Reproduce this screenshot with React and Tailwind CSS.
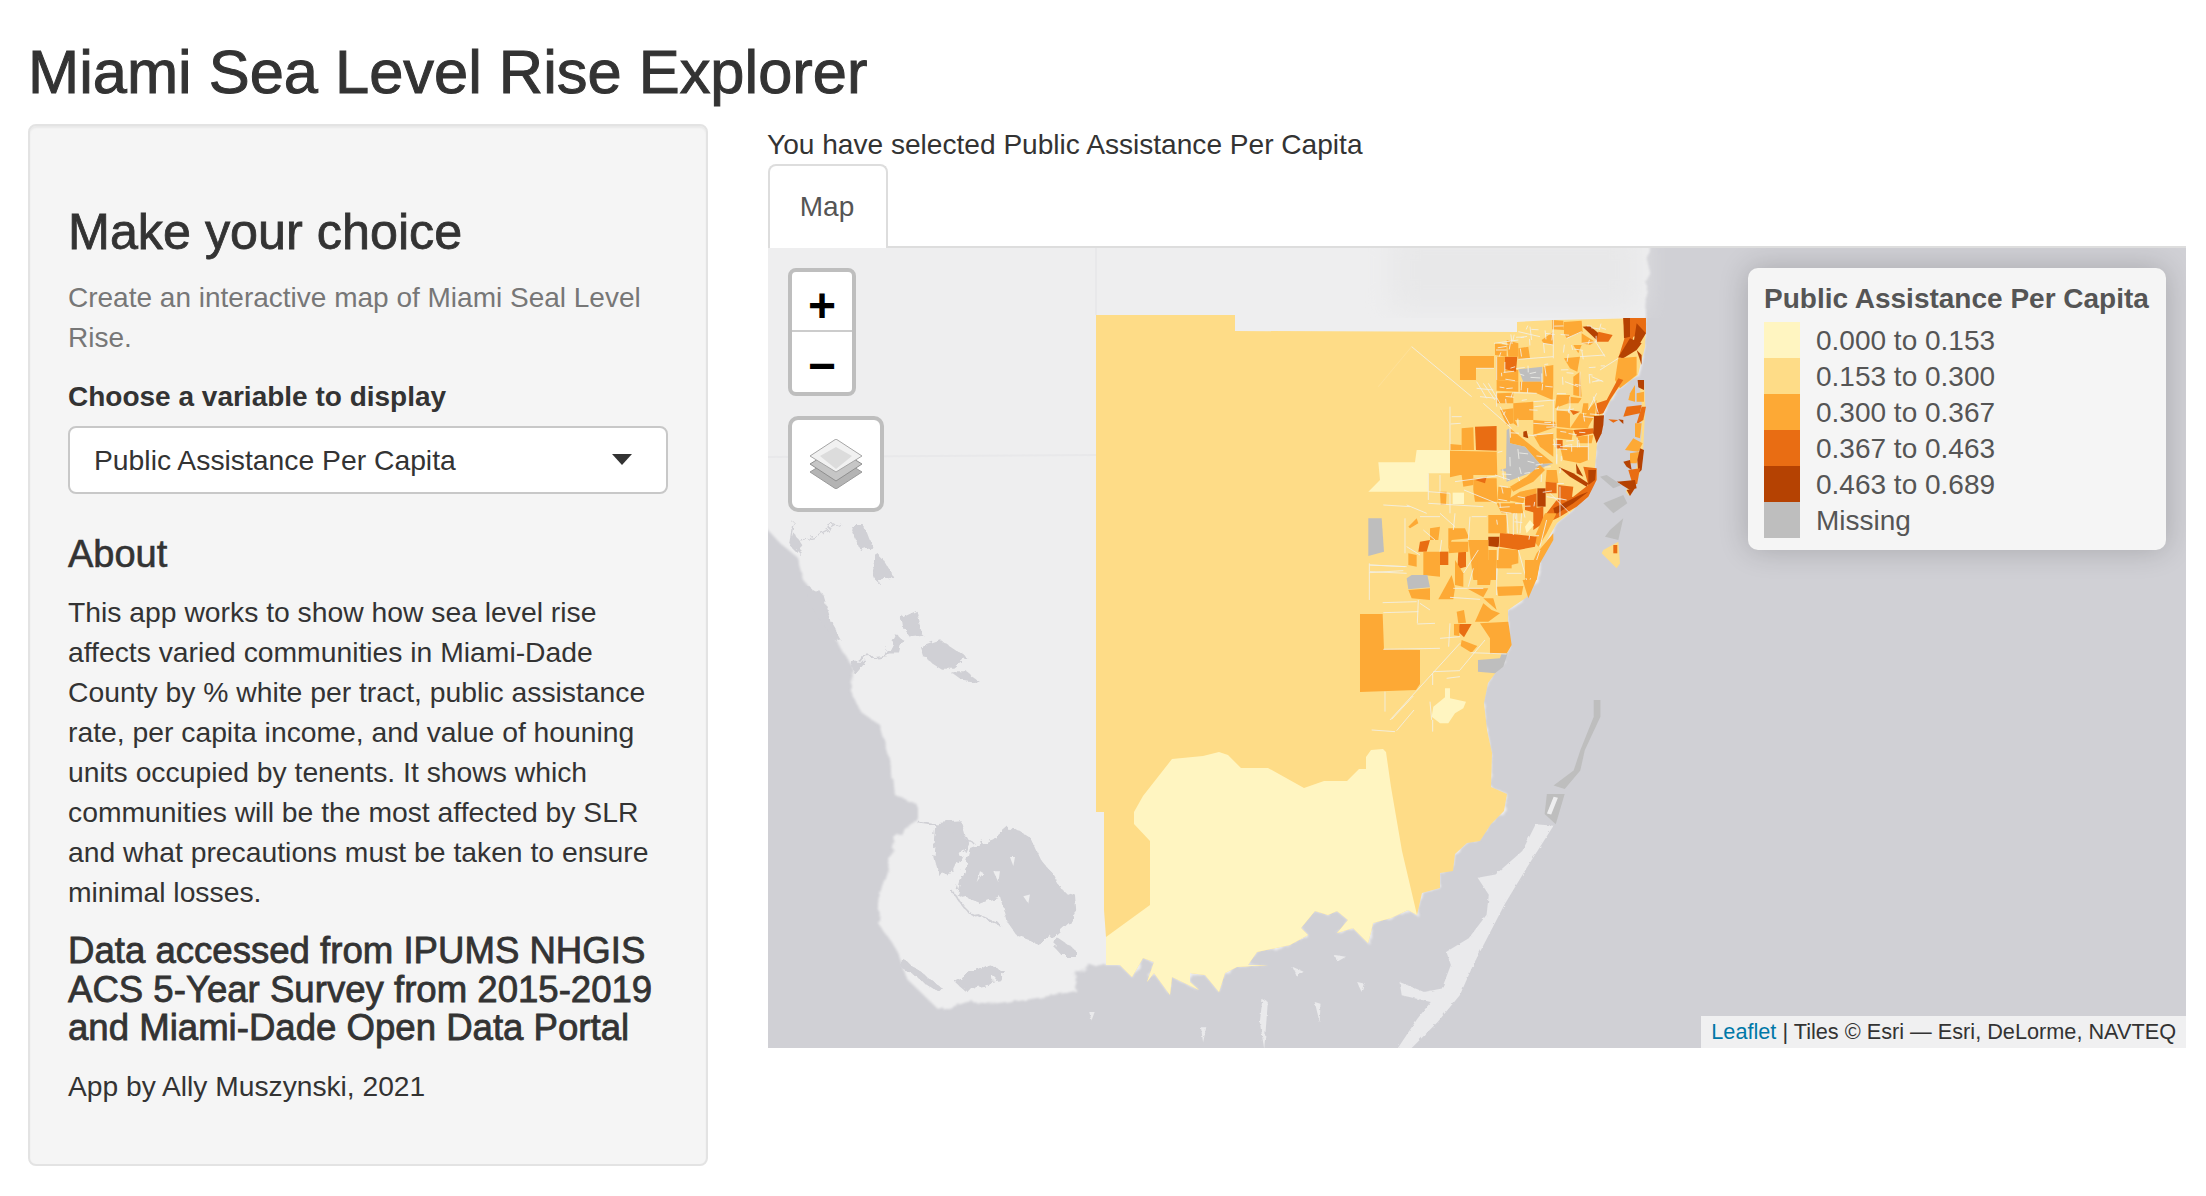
import React from "react";

const COLORS = {
  L: "#fff5c1",
  Y: "#fedc87",
  A: "#fda935",
  B: "#e96d13",
  C: "#b54202",
  G: "#bebebe",
};

const LEGEND = [
  ["#fff5c1", "0.000 to 0.153"],
  ["#fedc87", "0.153 to 0.300"],
  ["#fda935", "0.300 to 0.367"],
  ["#e96d13", "0.367 to 0.463"],
  ["#b54202", "0.463 to 0.689"],
  ["#bebebe", "Missing"],
];

/* ---------------- COASTLINES (page coordinates) ---------------- */
const EAST =
  "1646,318 1645,347 1638,375 1617,390 1603,413 1597,443 1595,467 1595,480 1585,497 1573,510 1557,523 1543,547 1540,560 1537,577 1527,597 1508,610 1508,640 1510,648 1500,667 1488,683 1484,703 1487,730 1492,753 1491,787 1507,794 1504,811 1491,824 1480,841 1467,843 1455,854 1453,871 1440,873 1440,888 1422,893 1417,915";
const SOUTH =
  "1408,910 1391,918 1373,923 1371,932 1368,943 1353,928 1337,933 1348,920 1337,911 1328,915 1315,911 1301,928 1308,935 1290,945 1257,952 1248,965 1268,965 1237,967 1225,973 1219,992 1205,975 1190,973 1190,982 1199,990 1172,977 1170,995 1154,973 1147,982 1154,962 1143,958 1132,977 1120,965 1106,965";
const WEST =
  "1089,965 1077,973 1076,991 1037,998 1000,1004 967,1002 940,1011 907,979 897,950 878,923 880,893 888,868 895,839 917,821 917,804 895,795 893,775 887,750 880,725 860,711 850,689 855,671 842,650 835,639 822,607 803,579 797,557 780,543 768,530";

const LAND = `700,190 1650,190 ${EAST} ${SOUTH} ${WEST} 700,470`;
const YELLOW = `1096,315 1235,315 1235,331 1517,332 1517,322 1553,320 1646,318 ${EAST} ${SOUTH} 1106,937 1104,910 1104,812 1096,812`;
const LIGHT = `1106,937 1150,905 1150,841 1134,824 1134,812 1143,796 1172,759 1203,756 1219,752 1228,755 1241,768 1268,768 1304,788 1324,781 1347,781 1359,769 1366,769 1366,757 1371,750 1383,749 1386,752 1391,787 1402,851 1417,915 ${SOUTH}`;

/* ---------------- TRACTS, NORTH HALF ---------------- */
const NORTH = [
  ["A", "360,168 462,168 462,205 408,205 408,240 360,240"],
  ["A", "468,170 495,170 495,210 535,210 535,245 468,240"],
  ["B", "495,170 532,170 528,215 495,208"],
  ["G", "535,208 607,200 607,245 550,245"],
  ["A", "636,60 670,62 672,90 636,88"],
  ["A", "672,66 725,62 728,95 680,115 672,100"],
  ["A", "725,100 765,125 750,135 725,130"],
  ["C", "728,80 750,78 782,105 770,120"],
  ["B", "775,95 818,105 805,125 770,125"],
  ["B", "850,54 918,54 918,100 880,110 870,150 835,175 855,110"],
  ["C", "850,54 870,54 870,110 852,115"],
  ["C", "890,70 918,100 900,130 880,135"],
  ["C", "870,115 905,130 890,150 850,175 835,172"],
  ["C", "890,150 905,165 905,195"],
  ["A", "835,175 890,170 890,225 840,265 825,240"],
  ["A", "700,135 725,135 715,160"],
  ["A", "672,175 720,170 712,215 690,205"],
  ["A", "605,120 640,95 640,135 610,130"],
  ["A", "535,145 565,140 570,175 535,178"],
  ["A", "465,130 500,135 500,170 465,165"],
  ["A", "500,120 535,130 535,170 505,170"],
  ["A", "610,200 640,195 640,260 610,260"],
  ["A", "470,240 535,245 535,275 470,272"],
  ["A", "540,245 605,245 640,260 638,300 590,280 540,275"],
  ["A", "520,310 580,305 580,360 525,360 535,380 520,370"],
  ["A", "470,280 520,278 520,310 470,310"],
  ["A", "480,330 520,325 520,370 500,375"],
  ["A", "700,230 720,215 725,290 700,285"],
  ["A", "650,285 690,285 685,310 645,325"],
  ["A", "745,330 770,300 765,345 745,380 720,380"],
  ["A", "720,340 745,345 745,385 690,385"],
  ["A", "580,360 645,365 650,380 580,405"],
  ["A", "580,405 640,400 640,470 600,440"],
  ["A", "660,440 745,440 745,480 720,490 670,480"],
  ["A", "650,330 690,335 690,385 650,380"],
  ["A", "690,290 725,295 715,310 685,310"],
  ["A", "730,310 745,310 745,340 725,340"],
  ["B", "690,330 720,335 700,345"],
  ["A", "650,385 700,390 695,420 650,415"],
  ["B", "700,390 760,385 762,400 710,410"],
  ["A", "710,410 760,405 755,430 715,430"],
  ["B", "648,420 668,420 668,448 648,445"],
  ["A", "365,385 400,382 402,450 365,450"],
  ["B", "405,380 470,378 470,452 408,450"],
  ["A", "330,452 470,455 472,525 360,525 330,532"],
  ["A", "330,432 365,435 365,450 330,450"],
  ["A", "510,385 640,490 600,492 555,440 510,430"],
  ["G", "500,390 508,385 510,430 555,440 600,492 640,490 555,525 500,545 498,515 480,510 498,505"],
  ["A", "365,525 400,525 400,555 370,560"],
  ["A", "400,535 470,535 472,605 405,605 400,570"],
  ["B", "405,540 440,530 435,550"],
  ["A", "475,560 515,565 510,605 472,605"],
  ["A", "300,575 320,575 318,615 302,615"],
  ["A", "510,560 560,530 600,495 615,510 580,545 520,575"],
  ["A", "540,575 590,565 590,580 555,590 550,610 500,600"],
  ["A", "620,510 650,510 655,550 617,545"],
  ["B", "555,590 590,580 590,640 555,630"],
  ["A", "470,610 545,610 550,640 500,640 485,640"],
  ["B", "580,625 610,620 610,670 580,690"],
  ["C", "592,565 617,565 617,620 592,620"],
  ["B", "617,545 650,548 650,580 617,580"],
  ["B", "655,555 700,560 695,600 655,595"],
  ["B", "730,500 770,505 770,540 745,590 710,620 660,650 640,660 612,650 650,600 700,590 745,555"],
  ["C", "708,490 730,530 710,520"],
  ["C", "745,510 768,510 765,540 745,555"],
  ["C", "655,500 700,520 745,550 740,560 690,530"],
  ["C", "640,625 720,585 745,575 700,610 645,645"],
  ["A", "615,640 650,640 620,700 595,740 580,720"],
  ["A", "555,840 590,760 640,700 640,720 600,790 590,840"],
  ["B", "480,698 590,710 585,740 535,750 478,740"],
  ["C", "445,710 478,710 476,742 445,738"],
  ["A", "445,645 500,645 500,700 445,700"],
  ["A", "475,745 535,750 535,790 475,805"],
  ["A", "445,750 470,750 470,840 445,840"],
  ["L", "555,680 570,660 582,675 560,700"],
  ["B", "240,725 270,720 260,755 235,755"],
  ["A", "250,755 300,755 300,830 250,825"],
  ["B", "300,755 325,755 325,795 300,795"],
  ["B", "355,755 378,755 378,800 352,808"],
  ["A", "325,685 375,685 388,715 335,720 325,750"],
  ["A", "385,720 445,720 445,840 400,840"],
  ["A", "330,725 385,725 385,755 325,760"],
  ["A", "205,680 230,655 235,670 210,685"],
  ["A", "270,685 300,680 295,720 270,720"],
  ["A", "205,760 230,765 230,800 205,795"],
  ["C", "762,348 792,346 790,375 785,400 770,430 760,400"],
  ["B", "770,310 800,300 835,235 850,240 810,300 790,340 770,345"],
  ["C", "550,395 560,392 565,415 550,410"],
  ["Y", "895,240 912,240 916,320 910,440 900,520 868,588 858,575 890,500 905,400 905,300"],
  ["C", "893,240 912,240 912,270 895,262"],
  ["A", "870,280 885,255 885,305 865,300"],
  ["A", "890,280 912,275 912,305 890,305"],
  ["B", "860,320 905,315 900,340 850,350"],
  ["B", "890,370 905,320 918,320 910,360 895,370"],
  ["A", "885,370 905,370 900,415 885,410"],
  ["A", "855,450 880,415 908,430 895,455"],
  ["A", "870,460 900,455 890,490 870,490"],
  ["C", "900,445 912,450 905,510 895,520 892,480"],
  ["C", "850,485 870,480 875,510 860,500"],
  ["B", "865,510 900,505 892,550 880,560"],
  ["C", "830,545 885,540 890,565 870,570"],
  ["C", "860,570 885,565 870,588"],
  ["B", "805,358 835,360 820,368"],
  ["C", "835,358 850,360 850,372"],
  ["G", "780,530 800,525 845,555 820,565"],
  ["G", "790,610 850,585 862,610 820,640"],
  ["G", "810,690 850,655 835,720 795,710"],
  ["Y", "790,750 835,725 840,790 830,805 785,760"],
  ["B", "820,735 832,735 832,760 820,760"],
  ["G", "85,655 125,655 132,755 85,768"],
  ["L", "115,487 225,487 230,450 330,450 330,520 265,520 265,575 85,575 120,540"],
  ["L", "338,578 372,578 372,612 338,612"],
];

/* ---------------- TRACTS, SOUTH HALF ---------------- */
const SOUTH_TRACTS = [
  ["G", "200,55 215,45 262,45 270,82 205,88"],
  ["A", "205,90 270,85 270,120 215,115"],
  ["A", "60,162 128,162 132,268 240,270 240,372 228,390 60,396"],
  ["L", "280,440 315,412 315,385 330,385 330,415 378,425 370,445 345,460 325,490 300,490 275,470"],
  ["G", "414,300 480,295 485,280 503,280 490,320 465,340 414,335"],
  ["A", "420,190 505,185 515,255 500,280 450,282 450,235"],
  ["B", "358,192 395,192 372,232 355,215"],
  ["A", "342,192 358,192 358,228 342,226"],
  ["A", "365,240 412,258 395,278 362,258"],
  ["A", "350,155 372,150 378,188 355,190"],
  ["A", "405,185 430,130 455,150 480,160 445,185"],
  ["A", "295,118 335,45 345,85 340,118"],
  ["A", "345,0 370,40 370,80 345,75"],
  ["A", "380,85 445,85 430,112"],
  ["A", "470,80 550,78 545,105 475,108"],
  ["A", "430,115 460,115 470,150"],
  ["A", "548,60 590,58 565,115"],
  ["A", "555,0 600,0 590,55 555,55"],
  ["A", "412,0 460,0 450,75 412,75"],
  ["A", "470,0 515,0 515,25 470,25"],
];

const SOUTH_GAPS = [
  "88,15 195,20", "88,38 190,32", "88,10 88,120", "128,128 230,125", "130,158 235,155",
  "235,120 232,190", "232,192 285,190", "330,112 420,118", "300,235 360,230", "330,190 326,260",
  "130,268 300,265", "360,250 150,480", "280,335 360,332", "278,340 278,375", "320,355 360,350",
  "135,395 135,455", "220,408 155,478", "222,450 170,512", "270,425 275,480", "278,480 278,515",
  "95,510 165,515", "392,278 500,282", "435,240 360,330", "340,85 430,85", "470,25 470,105",
  "545,40 500,40", "400,25 385,80", "240,130 270,150",
];

const NORTH_GAPS = [
  "215,140 395,290", "430,310 515,385", "330,320 330,450", "335,350 365,350",
  "332,372 362,370", "570,80 575,120", "640,60 640,175", "535,95 600,110", "535,178 640,170",
  "462,130 535,120", "468,150 500,150", "408,205 462,205", "470,170 470,240", "610,130 640,135",
  "680,115 725,95", "725,130 770,125", "770,130 795,170", "835,175 780,210", "720,170 795,165",
  "675,245 715,260", "720,215 720,290", "755,230 790,245", "770,280 745,330", "640,300 640,380",
  "580,305 645,300", "520,278 590,280", "470,275 470,320", "650,330 690,330", "690,290 690,330",
  "760,290 775,340", "660,440 745,440", "745,405 745,480", "650,415 650,490", "580,370 650,375",
  "580,405 640,400", "410,245 440,295", "430,250 465,300", "445,250 480,310", "410,265 460,270",
  "420,290 470,295", "480,320 510,375", "465,525 510,540", "345,545 470,528", "265,520 265,600",
  "300,525 300,575", "265,575 330,580", "372,570 470,610", "330,580 330,640", "265,610 430,620",
  "200,615 260,640", "130,615 210,620", "195,655 195,760", "240,650 300,650", "250,690 285,720",
  "300,640 345,680", "345,640 340,690", "395,650 440,650", "390,650 385,720", "305,720 300,755",
  "500,640 505,700", "520,640 520,705", "530,640 532,700", "545,640 540,700", "415,750 370,820",
  "475,740 470,840", "535,750 560,840", "600,750 570,840", "200,740 240,765", "90,795 200,800",
  "90,815 200,820", "620,660 600,740", "620,590 680,600", "660,560 660,650", "630,580 690,640",
];

/* short tract edges in the dense part of the county, same every run */
const makeEdges = () => {
  let seed = 7;
  const rnd = () => {
    seed = (seed * 16807) % 2147483647;
    return seed / 2147483647;
  };
  const out = [];
  for (let i = 0; i < 170; i++) {
    const x = 470 + rnd() * 340;
    const y = 70 + rnd() * 640;
    const limit = 900 - (y > 250 ? (y - 250) * 0.42 : 0) - 130;
    if (x > limit + 20) continue;
    const horizontal = rnd() > 0.5;
    const len = 10 + rnd() * 22;
    const skew = (rnd() - 0.5) * 10;
    out.push(horizontal ? `${x},${y} ${x + len},${y + skew}` : `${x},${y} ${x + skew},${y + len}`);
  }
  return out;
};
const EDGES = makeEdges();

const Tracts = ({ items }) =>
  items.map(([c, points], i) => <polygon key={i} points={points} fill={COLORS[c]} />);

const Gaps = ({ items, width = 2.5 }) =>
  items.map((points, i) => (
    <polyline key={i} points={points} fill="none" stroke="#f1f0ea" strokeWidth={width} />
  ));

/* ---------------- BASE MAP ---------------- */
const MiamiMap = () => (
  <svg viewBox="768 248 1418 800" className="block w-[1418px] h-[800px]">
    <defs>
      <filter id="coast" x="-5%" y="-5%" width="110%" height="110%">
        <feTurbulence type="fractalNoise" baseFrequency="0.09" numOctaves="3" seed="4" />
        <feDisplacementMap in="SourceGraphic" scale="7" />
        <feGaussianBlur stdDeviation="0.9" />
      </filter>
      <filter id="mottled" x="-5%" y="-5%" width="110%" height="110%">
        <feTurbulence type="fractalNoise" baseFrequency="0.035" numOctaves="3" seed="9" />
        <feDisplacementMap in="SourceGraphic" scale="34" />
        <feGaussianBlur stdDeviation="1.4" />
      </filter>
      <filter id="haze">
        <feGaussianBlur stdDeviation="14" />
      </filter>
    </defs>
    <rect x="768" y="248" width="1418" height="800" fill="#d0d0d5" />
    <polygon points={LAND} fill="#eeeeef" filter="url(#coast)" />
    <rect x="1390" y="230" width="250" height="80" fill="#e8e8e9" filter="url(#haze)" />
    <polyline points="768,457 1096,455" fill="none" stroke="#e8e8ea" strokeWidth="2" />
    <polyline points="1096,248 1096,315" fill="none" stroke="#e8e8ea" strokeWidth="2" />

    {/* west coast islands and bays */}
    <g transform="matrix(0.3333,0,0,0.357,760,500)" fill="#d0d0d5" filter="url(#mottled)">
      <polygon points="630,975 700,950 750,910 810,945 840,1005 885,1055 910,1095 945,1105 950,1165 885,1220 830,1240 770,1220 740,1180 720,1110 660,1130 590,1105 610,1040" />
      <polygon points="530,905 605,900 625,960 585,1040 535,1050 520,1000" />
      <polygon points="890,1225 945,1260 945,1280 910,1280 885,1255" />
      <polygon points="585,1350 680,1300 735,1320 720,1345 640,1360 620,1380" />
      <polygon points="430,1285 550,1370 540,1380 425,1310" />
      <polygon points="480,410 540,390 620,440 580,470 540,470 490,440" />
      <polygon points="570,480 620,480 660,510 600,500" />
      <polygon points="425,330 470,310 490,380 450,385 430,360" />
      <polygon points="380,430 410,380 430,390 420,430" />
      <polygon points="270,450 320,450 285,490" />
      <polygon points="330,180 365,160 400,215 350,230" />
      <polygon points="270,70 310,70 335,130 300,140" />
      <polygon points="130,235 190,265 215,345 245,395 215,385 170,320 135,280" />
      <polygon points="100,90 130,130 110,150 90,120" />
      <polyline points="580,1100 620,1150 720,1190" fill="none" stroke="#d0d0d5" strokeWidth="5" />
      <polyline points="470,900 540,910 640,960" fill="none" stroke="#d0d0d5" strokeWidth="5" />
      <polyline points="290,445 380,435 410,380" fill="none" stroke="#d0d0d5" strokeWidth="5" />
      <polyline points="100,60 90,120 170,100 240,65" fill="none" stroke="#d0d0d5" strokeWidth="4" />
    </g>
    <g transform="matrix(0.3333,0,0,0.357,760,500)" fill="#eeeeef" filter="url(#coast)">
      <polygon points="700,1040 720,1040 715,1070" />
      <polygon points="790,1110 810,1105 805,1130" />
      <polygon points="660,1040 670,1045 650,1070" />
      <polygon points="750,1000 765,1000 760,1025" />
    </g>

    {/* key largo and small keys in the bay */}
    <g transform="matrix(0.4464,0,0,0.3356,1000,700)" fill="#eaeaec" filter="url(#coast)">
      <polygon points="1200,370 1240,375 1180,500 1130,610 1060,790 1030,880 980,960 920,1040 890,1040 935,950 965,900 900,880 895,840 950,870 990,860 1010,790 1000,750 1050,710 1090,640 1095,580 1070,530 1110,520 1170,450" />
      <polygon points="650,690 680,710 660,720" />
      <polygon points="588,890 600,900 592,1040 582,960" />
      <polygon points="705,900 718,905 716,960" />
      <polygon points="200,930 212,930 205,955" />
      <polygon points="800,840 815,845 810,870" />
      <polygon points="655,795 680,810 665,825" />
      <polygon points="750,760 775,765 755,780" />
      <polygon points="450,975 462,975 455,1020" />
    </g>
    <g transform="matrix(0.4464,0,0,0.3356,1000,700)">
      <polygon points="1225,280 1265,280 1245,370 1220,340" fill="#bebebe" />
      <polyline points="1245,290 1230,340" fill="none" stroke="#eeeeef" strokeWidth="10" />
      <polygon points="1345,0 1345,50 1310,150 1300,210 1265,265 1240,255 1285,210 1300,150 1330,50 1330,0" fill="#bebebe" />
    </g>

    {/* county */}
    <polygon points={YELLOW} fill={COLORS.Y} />
    <polygon points={LIGHT} fill={COLORS.L} />
    <g transform="translate(1340,300) scale(0.3333)">
      <polyline points="215,140 115,260" fill="none" stroke="#fee3a2" strokeWidth="2" />
      <Tracts items={NORTH} />
      <Gaps items={EDGES} width={2.5} />
      <Gaps items={NORTH_GAPS} />
    </g>
    <g transform="translate(1340,560) scale(0.3333)">
      <Tracts items={SOUTH_TRACTS} />
      <Gaps items={SOUTH_GAPS} />
    </g>
  </svg>
);

const LayersIcon = () => (
  <svg width="52" height="50" viewBox="0 0 52 50">
    <polygon points="0,33 26,17 52,33 26,50" fill="#b4b4b4" stroke="#9a9a9a" />
    <polygon points="0,25 26,9 52,25 26,42" fill="#c6c6c6" stroke="#8f8f8f" />
    <polygon points="0,17 26,0 52,17 26,33" fill="#f1f1f1" stroke="#a5a5a5" />
    <polygon points="10,17 26,8 42,17 26,30" fill="#dcdcdc" />
  </svg>
);

export default function App() {
  return (
    <div className="min-h-[1196px] bg-white px-[28px] text-[#333] font-['Liberation_Sans',sans-serif] text-[28px] leading-[40px]">
      <h2 className="pt-[39px] mb-[19px] text-[61.4px] leading-[66px] [-webkit-text-stroke:1px_#333]">
        Miami Sea Level Rise Explorer
      </h2>

      <div className="flex items-start gap-[60px]">
        {/* SIDEBAR */}
        <div className="w-[680px] h-[1042px] shrink-0 rounded-[8px] border-2 border-[#e3e3e3] bg-[#f5f5f5] px-[38px] pt-[80px] shadow-[inset_0_2px_2px_rgba(0,0,0,0.05)]">
          <h3 className="mb-[20px] text-[50.3px] leading-[52px] [-webkit-text-stroke:0.8px_#333]">
            Make your choice
          </h3>
          <p className="mb-[19px] text-[#777]">
            Create an interactive map of Miami Seal Level Rise.
          </p>
          <label className="block mb-[9px] font-bold">Choose a variable to display</label>
          <div className="flex h-[68px] items-center justify-between rounded-[8px] border-2 border-[#c8c8c8] bg-white pl-[24px] pr-[34px] text-[28.3px]">
            <span>Public Assistance Per Capita</span>
            <span className="mb-[2px] h-0 w-0 border-x-[10px] border-t-[11px] border-x-transparent border-t-[#333]"></span>
          </div>
          <h4 className="mt-[40px] mb-[18px] text-[38px] leading-[40px] [-webkit-text-stroke:0.6px_#333]">
            About
          </h4>
          <p className="mb-[20px] text-[28.3px]">
            This app works to show how sea level rise affects varied communities in Miami-Dade
            County by % white per tract, public assistance rate, per capita income, and value of
            houning units occupied by tenents. It shows which communities will be the most affected
            by SLR and what precautions must be taken to ensure minimal losses.
          </p>
          <h4 className="mb-[18px] text-[36.6px] leading-[38.5px] [-webkit-text-stroke:0.8px_#333]">
            Data accessed from IPUMS NHGIS ACS 5-Year Survey from 2015-2019 and Miami-Dade Open Data
            Portal
          </h4>
          <p className="text-[28.2px]">App by Ally Muszynski, 2021</p>
        </div>

        {/* MAIN */}
        <div className="w-[1418px] shrink-0">
          <div className="-ml-[1px] h-[40px] pt-[1px] text-[28.1px]">
            You have selected Public Assistance Per Capita
          </div>
          <div className="h-[84px] border-b-2 border-[#ddd]">
            <div className="flex h-[84px] w-[120px] items-center justify-center rounded-t-[8px] border-2 border-b-0 border-[#ddd] bg-white pr-[2px] text-[#555]">
              Map
            </div>
          </div>

          <div className="relative h-[800px] overflow-hidden">
            <MiamiMap />

            {/* ZOOM */}
            <div className="absolute left-[20px] top-[20px] w-[68px] rounded-[8px] border-4 border-[#bebebe] bg-white text-black">
              <div className="flex h-[60px] items-center justify-center border-b-2 border-[#ccc] pt-[10px] text-[48px] font-bold leading-none">
                +
              </div>
              <div className="flex h-[60px] items-center justify-center pt-[8px] text-[48px] font-bold leading-none">
                −
              </div>
            </div>

            {/* LAYERS */}
            <div className="absolute left-[20px] top-[168px] flex h-[96px] w-[96px] items-center justify-center rounded-[10px] border-4 border-[#bebebe] bg-white">
              <LayersIcon />
            </div>

            {/* LEGEND */}
            <div className="absolute right-[20px] top-[20px] w-[418px] rounded-[10px] bg-[#f5f5f5] px-[16px] pt-[10px] pb-[12px] text-[#555] shadow-[0_0_30px_rgba(0,0,0,0.2)]">
              <div className="h-[44px] text-[28px] font-bold leading-[42px] whitespace-nowrap">
                Public Assistance Per Capita
              </div>
              {LEGEND.map(([color, label]) => (
                <div key={label} className="flex h-[36px] items-center gap-[16px] leading-[36px]">
                  <i className="block h-[36px] w-[36px]" style={{ backgroundColor: color }}></i>
                  <span className="pt-[2px]">{label}</span>
                </div>
              ))}
            </div>

            {/* ATTRIBUTION */}
            <div className="absolute bottom-0 right-0 h-[32px] whitespace-nowrap bg-[#f0f0f1] px-[10px] text-[21.7px] leading-[32px]">
              <span className="text-[#0078a8]">Leaflet</span> | Tiles © Esri — Esri, DeLorme, NAVTEQ
            </div>
          </div>
        </div>
      </div>
    </div>
  );
}
